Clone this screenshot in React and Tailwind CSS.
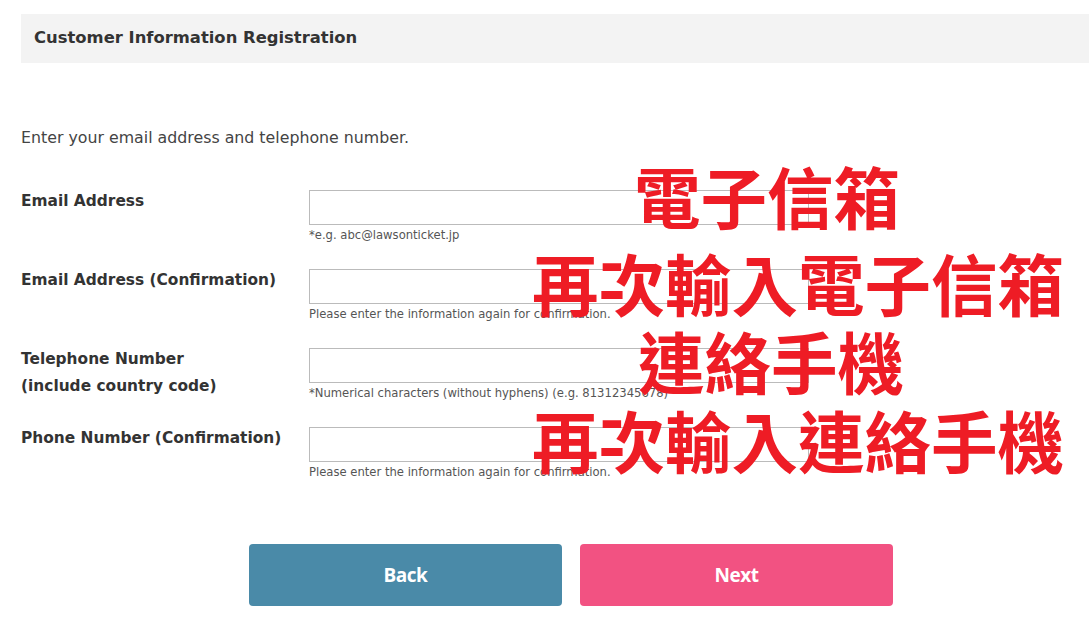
import React from 'react';

const fields = [
  { label: ['Email Address'], hint: '*e.g. abc@lawsonticket.jp' },
  { label: ['Email Address (Confirmation)'], hint: 'Please enter the information again for confirmation.' },
  { label: ['Telephone Number', '(include country code)'], hint: '*Numerical characters (without hyphens) (e.g. 81312345678)' },
  { label: ['Phone Number (Confirmation)'], hint: 'Please enter the information again for confirmation.' },
];

const notes = [
  { text: '電子信箱', cls: 'left-[634px] top-[155px]' },
  { text: '再次輸入電子信箱', cls: 'left-[532px] top-[242px]' },
  { text: '連絡手機', cls: 'left-[638px] top-[320px]' },
  { text: '再次輸入連絡手機', cls: 'left-[532px] top-[399px]' },
];

const App = () => {
  return (
    <div className="relative w-[1089px] h-[626px] overflow-hidden bg-white text-[#333] font-['DejaVu_Sans','Noto_Sans',sans-serif]">
      <div className="w-[1100px] ml-[21px] pt-[14px]">
        <div className="h-[49px] bg-[#f3f3f3] flex items-center px-[13px]">
          <h1 className="text-[16.4px] font-bold text-[#333] -mt-[1px]">Customer Information Registration</h1>
        </div>

        <p className="mt-[63px] text-[15.8px] leading-[24px] text-[#444]">Enter your email address and telephone number.</p>

        <div className="mt-[40px] flex flex-col gap-[26px]">
          {fields.map((f, i) => (
            <div key={i} className="flex">
              <div className="w-[288px] text-[15.4px] font-bold leading-[27px] -mt-[2px]">
                {f.label.map((l, j) => (
                  <div key={j}>{l}</div>
                ))}
              </div>
              <div className="flex flex-col">
                <input type="text" className="w-[500px] h-[35px] border border-[#bbb] bg-white outline-none" />
                <span className="mt-[2px] text-[11.6px] leading-[16px] text-[#555]">{f.hint}</span>
              </div>
            </div>
          ))}
        </div>

        <div className="mt-[64px] flex justify-center gap-[18px] font-['Open_Sans',sans-serif]">
          <button className="w-[313px] h-[62px] rounded-[4px] bg-[#4a8aa8] text-white text-[19px] font-bold tracking-[-0.5px]">Back</button>
          <button className="w-[313px] h-[62px] rounded-[4px] bg-[#f25282] text-white text-[19px] font-bold tracking-[-0.5px]">Next</button>
        </div>
      </div>

      {notes.map((n, i) => (
        <div
          key={i}
          className={`absolute ${n.cls} text-[66.5px] leading-[80px] font-bold text-[#ee1c25] whitespace-nowrap font-['Noto_Sans_CJK_TC',sans-serif]`}
        >
          {n.text}
        </div>
      ))}
    </div>
  );
};

export default App;
